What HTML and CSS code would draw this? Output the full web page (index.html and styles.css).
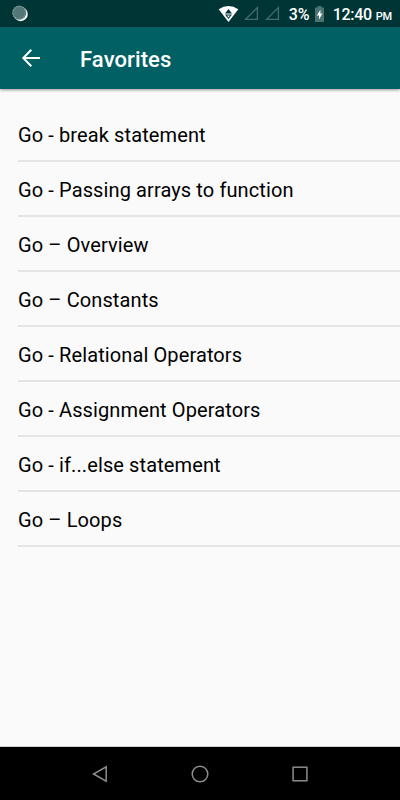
FILE: index.html
```html
<!DOCTYPE html>
<html lang="en">

<head>
    <meta charset="UTF-8">
    <meta name="viewport" content="width=device-width, initial-scale=1.0">
    <title>Favorites</title>
    <link rel="stylesheet" href="styles.css">
</head>

<body>
    <div id="status">
        <svg class="sync" width="16" height="17" viewBox="0 0 16 17">
            <circle cx="8.6" cy="9" r="7.2" fill="#fff" />
            <circle cx="7.3" cy="7.7" r="7" fill="#527776" />
            <circle cx="7.3" cy="7.7" r="6.4" fill="none" stroke="#8ba4a3" stroke-width="1.4" stroke-dasharray="1 1.2" />
        </svg>
        <div class="icons">
            <svg class="wifi" width="22" height="16" viewBox="0 0 22 16">
                <path d="M0.7 3.2Q10.5 -3 20.3 3.2L10.5 16Z" fill="#fff" />
                <path d="M10.5 3L14 7.5H7Z M7 8.5H14L10.5 13Z" fill="#003536" />
                <path d="M9 9.5H12L10.5 11.4Z" fill="#fff" />
            </svg>
            <svg class="signal" width="15" height="15" viewBox="0 0 15 15">
                <path d="M1.6 13.4H13.4V1.6Z" />
            </svg>
            <svg class="signal" width="15" height="15" viewBox="0 0 15 15">
                <path d="M1.6 13.4H13.4V1.6Z" />
            </svg>
            <span class="percent">3%</span>
            <svg class="battery" width="9" height="16" viewBox="0 0 9 16">
                <path d="M2.5 0H6.5V1.5H9V16H0V1.5H2.5Z" fill="#4d7272" />
                <path d="M5.4 3.7L1.8 9.4H4V13.4L7.4 7.6H5.4Z" fill="#fff" />
            </svg>
            <span class="time">12:40</span>
            <span class="pm">PM</span>
        </div>
    </div>

    <div id="header">
        <svg width="20" height="20" viewBox="0 0 20 20">
            <path d="M19 10H2.5M10.3 1.8L2.3 10L10.3 18.2" fill="none" stroke="#fff" stroke-width="2" />
        </svg>
        <h1>Favorites</h1>
    </div>

    <ul id="favorites">
        <li>Go - break statement</li>
        <li>Go - Passing arrays to function</li>
        <li>Go – Overview</li>
        <li>Go – Constants</li>
        <li>Go - Relational Operators</li>
        <li>Go - Assignment Operators</li>
        <li>Go - if...else statement</li>
        <li>Go – Loops</li>
    </ul>

    <div id="nav">
        <svg width="20" height="20" viewBox="0 0 20 20">
            <path d="M16.2 2.8V17.2L3.5 10Z" />
        </svg>
        <svg width="20" height="20" viewBox="0 0 20 20">
            <circle cx="10" cy="10" r="7.8" />
        </svg>
        <svg width="20" height="20" viewBox="0 0 20 20">
            <rect x="3.1" y="3.2" width="13.8" height="13.6" />
        </svg>
    </div>
</body>

</html>
```
FILE: styles.css
```css
* {
    box-sizing: border-box;
}

body {
    margin: 0;
    height: 800px;
    display: flex;
    flex-direction: column;
    overflow: hidden;
    background: #fafafa;
    font-family: Roboto, sans-serif;
}

#status {
    height: 27px;
    padding: 0 8px 0 12px;
    display: flex;
    align-items: center;
    justify-content: space-between;
    background: #003536;
    color: white;
}

.icons {
    display: flex;
    align-items: center;
    font-size: 16px;
    font-weight: 500;
    line-height: 25px;
}

.wifi {
    margin-right: 4px;
}

.signal {
    margin-right: 6px;
}

.signal path {
    fill: none;
    stroke: #456b6b;
    stroke-width: 1.3;
}

.percent {
    margin-left: 3px;
    margin-right: 5px;
    padding-top: 2px;
}

.battery {
    margin-right: 9px;
}

.time {
    padding-top: 2px;
    letter-spacing: -0.3px;
}

.pm {
    margin-left: 4px;
    padding-top: 5px;
    font-size: 11px;
    letter-spacing: -0.2px;
}

#header {
    height: 62px;
    padding-left: 21px;
    display: flex;
    align-items: center;
    background: #006064;
    color: white;
    box-shadow: 0 1px 3px rgba(0, 0, 0, 0.4);
}

#header h1 {
    margin: 3px 0 0 39px;
    font-size: 22px;
    font-weight: 500;
    letter-spacing: 0.1px;
}

#favorites {
    flex: 1;
    margin: 0;
    padding: 18px 0 0 18px;
    list-style: none;
}

#favorites li {
    height: 55px;
    border-bottom: 2px solid #e4e4e4;
    color: black;
    font-size: 20px;
    line-height: 57px;
    letter-spacing: 0.11px;
}

#nav {
    height: 54px;
    padding: 0 90px;
    display: flex;
    align-items: center;
    justify-content: space-between;
    border-top: 1px solid #d0d0d0;
    background: black;
}

#nav svg {
    fill: none;
    stroke: #8c8c8c;
    stroke-width: 1.5;
}
```
